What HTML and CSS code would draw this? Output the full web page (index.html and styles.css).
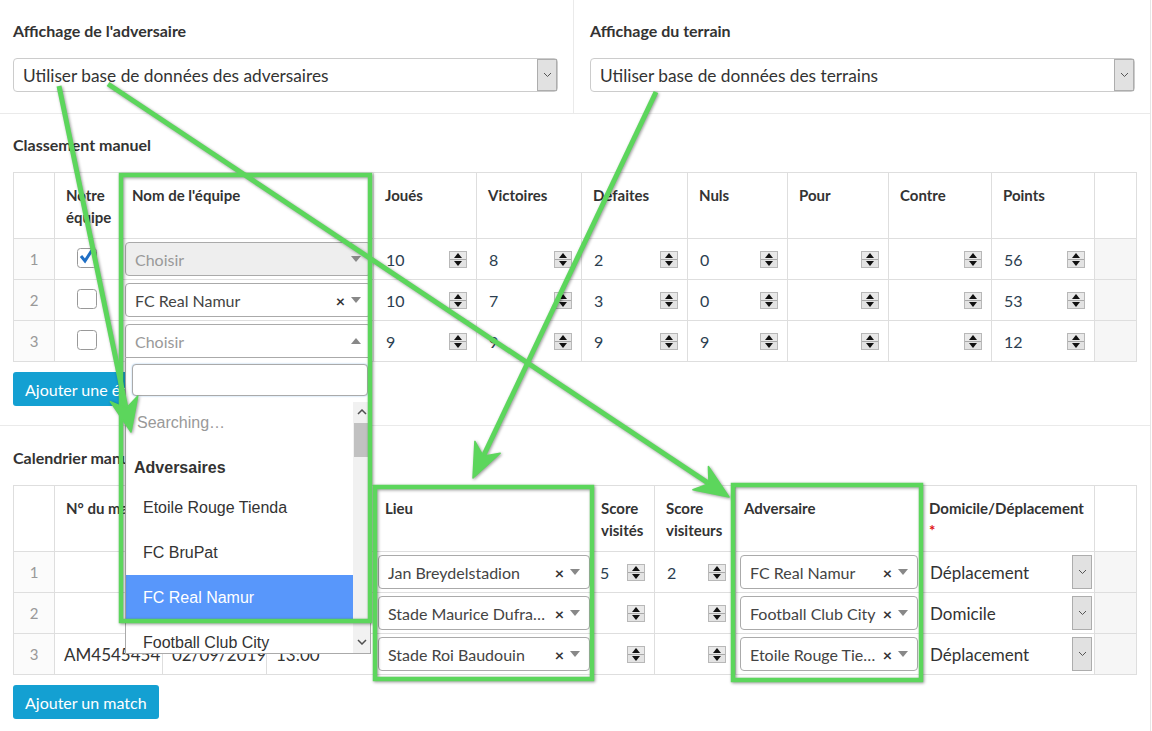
FILE: index.html
```html
<!DOCTYPE html>
<html lang="fr">
<head>
    <meta charset="UTF-8">
    <title>Classement et calendrier manuels</title>
    <link rel="stylesheet" href="styles.css">
</head>
<body>
<div class="page">

    <div class="display-options">
        <div class="option">
            <label>Affichage de l'adversaire</label>
            <div class="native-select">
                <span class="value">Utiliser base de données des adversaires</span>
                <span class="drop-btn"><svg width="9" height="6" viewBox="0 0 9 6"><polyline points="1,1 4.5,4.5 8,1" fill="none" stroke="#555" stroke-width="1"/></svg></span>
            </div>
        </div>
        <div class="option">
            <label>Affichage du terrain</label>
            <div class="native-select">
                <span class="value">Utiliser base de données des terrains</span>
                <span class="drop-btn"><svg width="9" height="6" viewBox="0 0 9 6"><polyline points="1,1 4.5,4.5 8,1" fill="none" stroke="#555" stroke-width="1"/></svg></span>
            </div>
        </div>
    </div>

    <!-- Classement -->
    <section class="block first">
        <h3>Classement manuel</h3>
        <table class="grid">
            <colgroup>
                <col style="width:41px"><col style="width:66px"><col style="width:253px"><col style="width:103px">
                <col style="width:105px"><col style="width:106px"><col style="width:100px"><col style="width:101px">
                <col style="width:103px"><col style="width:103px"><col style="width:42px">
            </colgroup>
            <thead>
                <tr>
                    <th></th><th>Notre équipe</th><th>Nom de l'équipe</th><th>Joués</th><th>Victoires</th>
                    <th>Défaites</th><th>Nuls</th><th>Pour</th><th>Contre</th><th>Points</th><th></th>
                </tr>
            </thead>
            <tbody>
                <tr>
                    <td class="rownum">1</td>
                    <td class="check"><svg class="box" width="22" height="24" viewBox="0 0 22 24"><rect x="1.5" y="3.5" width="19" height="19" rx="3" fill="#fff" stroke="#999"/><polyline points="5,11 9,16 18,2" fill="none" stroke="#1f6fc5" stroke-width="3"/></svg></td>
                    <td class="sel"><div class="s2 disabled"><span class="s2-text">Choisir</span><span class="s2-arrow"></span></div></td>
                    <td><div class="numin"><span>10</span><span class="spin"></span></div></td>
                    <td><div class="numin"><span>8</span><span class="spin"></span></div></td>
                    <td><div class="numin"><span>2</span><span class="spin"></span></div></td>
                    <td><div class="numin"><span>0</span><span class="spin"></span></div></td>
                    <td><div class="numin"><span></span><span class="spin"></span></div></td>
                    <td><div class="numin"><span></span><span class="spin"></span></div></td>
                    <td><div class="numin"><span>56</span><span class="spin"></span></div></td>
                    <td class="filler"></td>
                </tr>
                <tr>
                    <td class="rownum">2</td>
                    <td class="check"><svg class="box" width="22" height="24" viewBox="0 0 22 24"><rect x="1.5" y="3.5" width="19" height="19" rx="3" fill="#fff" stroke="#999"/></svg></td>
                    <td class="sel"><div class="s2"><span class="s2-text">FC Real Namur</span><span class="s2-clear">×</span><span class="s2-arrow"></span></div></td>
                    <td><div class="numin"><span>10</span><span class="spin"></span></div></td>
                    <td><div class="numin"><span>7</span><span class="spin"></span></div></td>
                    <td><div class="numin"><span>3</span><span class="spin"></span></div></td>
                    <td><div class="numin"><span>0</span><span class="spin"></span></div></td>
                    <td><div class="numin"><span></span><span class="spin"></span></div></td>
                    <td><div class="numin"><span></span><span class="spin"></span></div></td>
                    <td><div class="numin"><span>53</span><span class="spin"></span></div></td>
                    <td class="filler"></td>
                </tr>
                <tr>
                    <td class="rownum">3</td>
                    <td class="check"><svg class="box" width="22" height="24" viewBox="0 0 22 24"><rect x="1.5" y="3.5" width="19" height="19" rx="3" fill="#fff" stroke="#999"/></svg></td>
                    <td class="sel">
                        <div class="s2 open">
                            <span class="s2-text">Choisir</span><span class="s2-arrow"></span>
                            <div class="s2-dropdown">
                                <div class="s2-search"><input type="text"></div>
                                <div class="s2-results">
                                    <ul>
                                        <li class="msg">Searching…</li>
                                        <li class="group">Adversaires</li>
                                        <li class="opt">Etoile Rouge Tienda</li>
                                        <li class="opt">FC BruPat</li>
                                        <li class="opt hl">FC Real Namur</li>
                                        <li class="opt">Football Club City</li>
                                    </ul>
                                    <div class="scrollbar">
                                        <span class="sb-arrow"><svg width="10" height="6" viewBox="0 0 10 6"><polyline points="1,5 5,1 9,5" fill="none" stroke="#505050" stroke-width="1.5"/></svg></span>
                                        <span class="sb-thumb"></span>
                                        <span class="sb-arrow"><svg width="10" height="6" viewBox="0 0 10 6"><polyline points="1,1 5,5 9,1" fill="none" stroke="#505050" stroke-width="1.5"/></svg></span>
                                    </div>
                                </div>
                            </div>
                        </div>
                    </td>
                    <td><div class="numin"><span>9</span><span class="spin"></span></div></td>
                    <td><div class="numin"><span>9</span><span class="spin"></span></div></td>
                    <td><div class="numin"><span>9</span><span class="spin"></span></div></td>
                    <td><div class="numin"><span>9</span><span class="spin"></span></div></td>
                    <td><div class="numin"><span></span><span class="spin"></span></div></td>
                    <td><div class="numin"><span></span><span class="spin"></span></div></td>
                    <td><div class="numin"><span>12</span><span class="spin"></span></div></td>
                    <td class="filler"></td>
                </tr>
            </tbody>
        </table>
        <button class="btn">Ajouter une équipe</button>
    </section>

    <!-- Calendrier -->
    <section class="block second">
        <h3>Calendrier manuel</h3>
        <table class="grid">
            <colgroup>
                <col style="width:41px"><col style="width:108px"><col style="width:104px"><col style="width:107px">
                <col style="width:219px"><col style="width:62px"><col style="width:81px"><col style="width:185px">
                <col style="width:174px"><col style="width:42px">
            </colgroup>
            <thead>
                <tr>
                    <th></th><th>N° du match</th><th>Date</th><th>Heure</th><th>Lieu</th><th class="narrow">Score visités</th>
                    <th>Score visiteurs</th><th class="narrow">Adversaire</th><th class="narrow"><span class="nowrap">Domicile/Déplacement</span> <span class="req">*</span></th><th></th>
                </tr>
            </thead>
            <tbody>
                <tr>
                    <td class="rownum">1</td><td class="txt"></td><td class="txt"></td><td class="txt"></td>
                    <td class="sel"><div class="s2"><span class="s2-text">Jan Breydelstadion</span><span class="s2-clear">×</span><span class="s2-arrow"></span></div></td>
                    <td><div class="numin tight"><span>5</span><span class="spin"></span></div></td>
                    <td><div class="numin"><span>2</span><span class="spin"></span></div></td>
                    <td class="sel"><div class="s2"><span class="s2-text">FC Real Namur</span><span class="s2-clear">×</span><span class="s2-arrow"></span></div></td>
                    <td><div class="plain-select"><span>Déplacement</span><span class="drop-btn"><svg width="9" height="6" viewBox="0 0 9 6"><polyline points="1,1 4.5,4.5 8,1" fill="none" stroke="#555" stroke-width="1"/></svg></span></div></td>
                    <td class="filler"></td>
                </tr>
                <tr>
                    <td class="rownum">2</td><td class="txt"></td><td class="txt"></td><td class="txt"></td>
                    <td class="sel"><div class="s2"><span class="s2-text">Stade Maurice Dufrasne</span><span class="s2-clear">×</span><span class="s2-arrow"></span></div></td>
                    <td><div class="numin tight"><span></span><span class="spin"></span></div></td>
                    <td><div class="numin"><span></span><span class="spin"></span></div></td>
                    <td class="sel"><div class="s2"><span class="s2-text">Football Club City</span><span class="s2-clear">×</span><span class="s2-arrow"></span></div></td>
                    <td><div class="plain-select"><span>Domicile</span><span class="drop-btn"><svg width="9" height="6" viewBox="0 0 9 6"><polyline points="1,1 4.5,4.5 8,1" fill="none" stroke="#555" stroke-width="1"/></svg></span></div></td>
                    <td class="filler"></td>
                </tr>
                <tr>
                    <td class="rownum">3</td><td class="txt">AM4545454</td><td class="txt">02/09/2019</td><td class="txt">13:00</td>
                    <td class="sel"><div class="s2"><span class="s2-text">Stade Roi Baudouin</span><span class="s2-clear">×</span><span class="s2-arrow"></span></div></td>
                    <td><div class="numin tight"><span></span><span class="spin"></span></div></td>
                    <td><div class="numin"><span></span><span class="spin"></span></div></td>
                    <td class="sel"><div class="s2"><span class="s2-text">Etoile Rouge Tienda</span><span class="s2-clear">×</span><span class="s2-arrow"></span></div></td>
                    <td><div class="plain-select"><span>Déplacement</span><span class="drop-btn"><svg width="9" height="6" viewBox="0 0 9 6"><polyline points="1,1 4.5,4.5 8,1" fill="none" stroke="#555" stroke-width="1"/></svg></span></div></td>
                    <td class="filler"></td>
                </tr>
            </tbody>
        </table>
        <button class="btn">Ajouter un match</button>
    </section>

    <!-- annotations drawn over the screenshot -->
    <svg class="annotations" width="1152" height="731" viewBox="0 0 1152 731">
        <g fill="none" stroke="#5cd65c" stroke-width="4.5">
            <rect x="121" y="175" width="249" height="446"/>
            <rect x="375" y="487" width="217" height="192"/>
            <rect x="733" y="485" width="188" height="195"/>
        </g>
        <g stroke="#5cd65c" stroke-width="5">
            <line x1="59" y1="86" x2="126" y2="408"/>
            <line x1="108" y1="84" x2="709" y2="483.7"/>
            <line x1="656" y1="92" x2="483.3" y2="456.3"/>
        </g>
        <g fill="#5cd65c" stroke="#5cd65c" stroke-width="1.5" stroke-linejoin="round">
            <polygon points="131,432 137.8,395.9 126.1,408.5 110.4,401.6"/>
            <polygon points="729,497 708.4,466.5 709,483.7 692.9,489.8"/>
            <polygon points="473,478 500.2,453.3 483.3,456.3 474.9,441.3"/>
        </g>
    </svg>
</div>
</body>
</html>
```

FILE: styles.css
```css
/* Base */
body {
    margin: 0;
    font-family: Lato, "Liberation Sans", sans-serif;
    color: #333;
    background: #fff;
}

.page {
    position: relative;
    width: 1151px;
    min-height: 731px;
    border-right: 1px solid #e6e6e6;
    box-sizing: border-box;
}

/* Display options */
.display-options {
    display: grid;
    grid-template-columns: 573px 1fr;
    height: 114px;
    border-bottom: 1px solid #eaeaea;
    box-sizing: border-box;
}

.option {
    padding: 22px 15px 0 13px;
}

.option + .option {
    border-left: 1px solid #eaeaea;
    padding-left: 16px;
}

.option label {
    display: block;
    font-size: 16px;
    font-weight: bold;
    line-height: 18px;
    margin-bottom: 18px;
}

.native-select {
    display: flex;
    align-items: center;
    height: 34px;
    padding-left: 9px;
    border: 1px solid #ccc;
    border-radius: 4px;
    box-sizing: border-box;
    font-size: 17.3px;
}

.native-select .value {
    flex: 1;
}

.drop-btn {
    display: flex;
    align-items: center;
    justify-content: center;
    width: 20px;
    height: 32px;
    border: 1px solid #adadad;
    background: #e1e1e1;
    box-sizing: border-box;
}

/* Sections */
.block {
    padding: 22px 14px 19px 13px;
}

.block.first {
    border-bottom: 1px solid #eaeaea;
}

.block.second {
    padding-top: 23px;
}

.block h3 {
    margin: 0 0 18px;
    font-size: 16px;
    line-height: 18px;
    font-weight: bold;
}

.btn {
    display: inline-block;
    height: 34px;
    margin-top: 10px;
    padding: 0 12px;
    border: none;
    border-radius: 3px;
    background: #14a0d2;
    color: #fff;
    font-family: Lato, sans-serif;
    font-size: 16px;
}

/* Grids */
.grid {
    width: 1123px;
    table-layout: fixed;
    border-collapse: collapse;
}

.grid th,
.grid td {
    border: 1px solid #dedede;
    padding: 0;
}

.grid thead tr {
    height: 66px;
}

.grid tbody tr {
    height: 41px;
}

.grid th {
    vertical-align: top;
    text-align: left;
    padding: 11px 11px 0;
    font-size: 15px;
    line-height: 22px;
    font-weight: bold;
}

.grid th.narrow {
    padding-left: 8px;
    padding-right: 4px;
}

.nowrap {
    white-space: nowrap;
}

.grid td {
    vertical-align: middle;
    font-size: 16px;
    color: #2c3e50;
}

.req {
    display: block;
    color: #e01010;
}

.grid .rownum {
    text-align: center;
    color: #999;
    font-size: 15px;
    background: #fbfbfb;
}

.grid .filler {
    background: #f6f6f6;
}

.check {
    text-align: center;
}

.check .box {
    display: inline-block;
    margin: -8px 0 0 -2px;
    vertical-align: middle;
}

.grid .txt {
    padding-left: 9px;
    font-size: 17px;
    color: #333;
}

.grid .sel {
    padding: 0 2px 0 4px;
}

/* Number input with spinner */
.numin {
    display: flex;
    align-items: center;
    justify-content: space-between;
    padding: 0 9px 0 12px;
}

.numin.tight {
    padding-left: 7px;
}

.spin {
    position: relative;
    width: 18px;
    height: 17px;
    border: 1px solid #b8b8b8;
    box-sizing: border-box;
    background: linear-gradient(#e9e9e9 0 7px, #a8a8a8 7px 8px, #e3e3e3 8px);
}

.spin::before,
.spin::after {
    content: "";
    position: absolute;
    left: 4px;
    border-left: 4px solid transparent;
    border-right: 4px solid transparent;
}

.spin::before {
    top: 1px;
    border-bottom: 5px solid #111;
}

.spin::after {
    bottom: 1px;
    border-top: 5px solid #111;
}

/* Select2-like boxes */
.s2 {
    position: relative;
    display: flex;
    align-items: center;
    height: 34px;
    padding-left: 9px;
    border: 1px solid #aaa;
    border-radius: 4px;
    background: #fff;
    box-sizing: border-box;
}

.s2-text {
    flex: 1;
    min-width: 0;
    white-space: nowrap;
    overflow: hidden;
    text-overflow: ellipsis;
    font-size: 16px;
    color: #444;
}

.s2-clear {
    margin: 0 1px 0 4px;
    font-size: 16px;
    font-weight: bold;
    color: #333;
}

.s2-arrow {
    display: flex;
    justify-content: center;
    width: 20px;
    margin-right: 4px;
}

.s2-arrow::before {
    content: "";
    border-left: 5px solid transparent;
    border-right: 5px solid transparent;
    border-top: 6px solid #888;
}

.s2.disabled {
    background: #eee;
}

.s2.disabled .s2-text,
.s2.open .s2-text {
    color: #999;
}

.s2.open {
    border-bottom-left-radius: 0;
    border-bottom-right-radius: 0;
}

.s2.open .s2-arrow::before {
    border-top: none;
    border-bottom: 6px solid #888;
}

.s2-dropdown {
    position: absolute;
    top: 33px;
    left: -1px;
    z-index: 10;
    width: 246px;
    height: 296px;
    border: 1px solid #aaa;
    border-top: none;
    background: #fff;
    box-sizing: border-box;
    display: flex;
    flex-direction: column;
}

.s2-search {
    padding: 6px 2px 0 6px;
}

.s2-search input {
    display: block;
    width: 100%;
    height: 32px;
    border: 1px solid #aaa;
    border-radius: 4px;
    box-shadow: 0 0 2px #9cc6ec;
    box-sizing: border-box;
}

.s2-results {
    display: flex;
    flex: 1;
    min-height: 0;
    margin-top: 6px;
    overflow: hidden;
    font-family: "Liberation Sans", Arial, sans-serif;
    font-size: 16px;
}

.s2-results ul {
    flex: 1;
    margin: 0;
    padding: 0;
    list-style: none;
}

.s2-results li {
    padding: 0 11px;
    color: #333;
}

.s2-results .msg {
    height: 42px;
    line-height: 42px;
    color: #999;
}

.s2-results .group {
    height: 41px;
    line-height: 48px;
    padding-left: 8px;
    font-weight: bold;
}

.s2-results .opt {
    height: 45px;
    line-height: 45px;
    padding-left: 17px;
}

.s2-results .opt.hl {
    background: #5897fb;
    color: #fff;
}

.scrollbar {
    display: flex;
    flex-direction: column;
    width: 17px;
    background: #f1f1f1;
}

.sb-arrow {
    display: flex;
    align-items: center;
    justify-content: center;
    height: 19px;
}

.sb-thumb {
    height: 34px;
    margin: 2px 1px 0;
    background: #c1c1c1;
}

.sb-thumb + .sb-arrow {
    margin-top: auto;
    margin-bottom: 2px;
}

/* Plain native select in calendar */
.plain-select {
    display: flex;
    align-items: center;
    justify-content: space-between;
    padding: 0 2px 0 9px;
    font-size: 17px;
    color: #333;
}

.plain-select .drop-btn {
    height: 34px;
}

/* Annotation layer */
.annotations {
    position: absolute;
    top: 0;
    left: 0;
    z-index: 20;
    pointer-events: none;
    filter: drop-shadow(1px 1px 1.5px rgba(0, 0, 0, 0.4));
}
```
